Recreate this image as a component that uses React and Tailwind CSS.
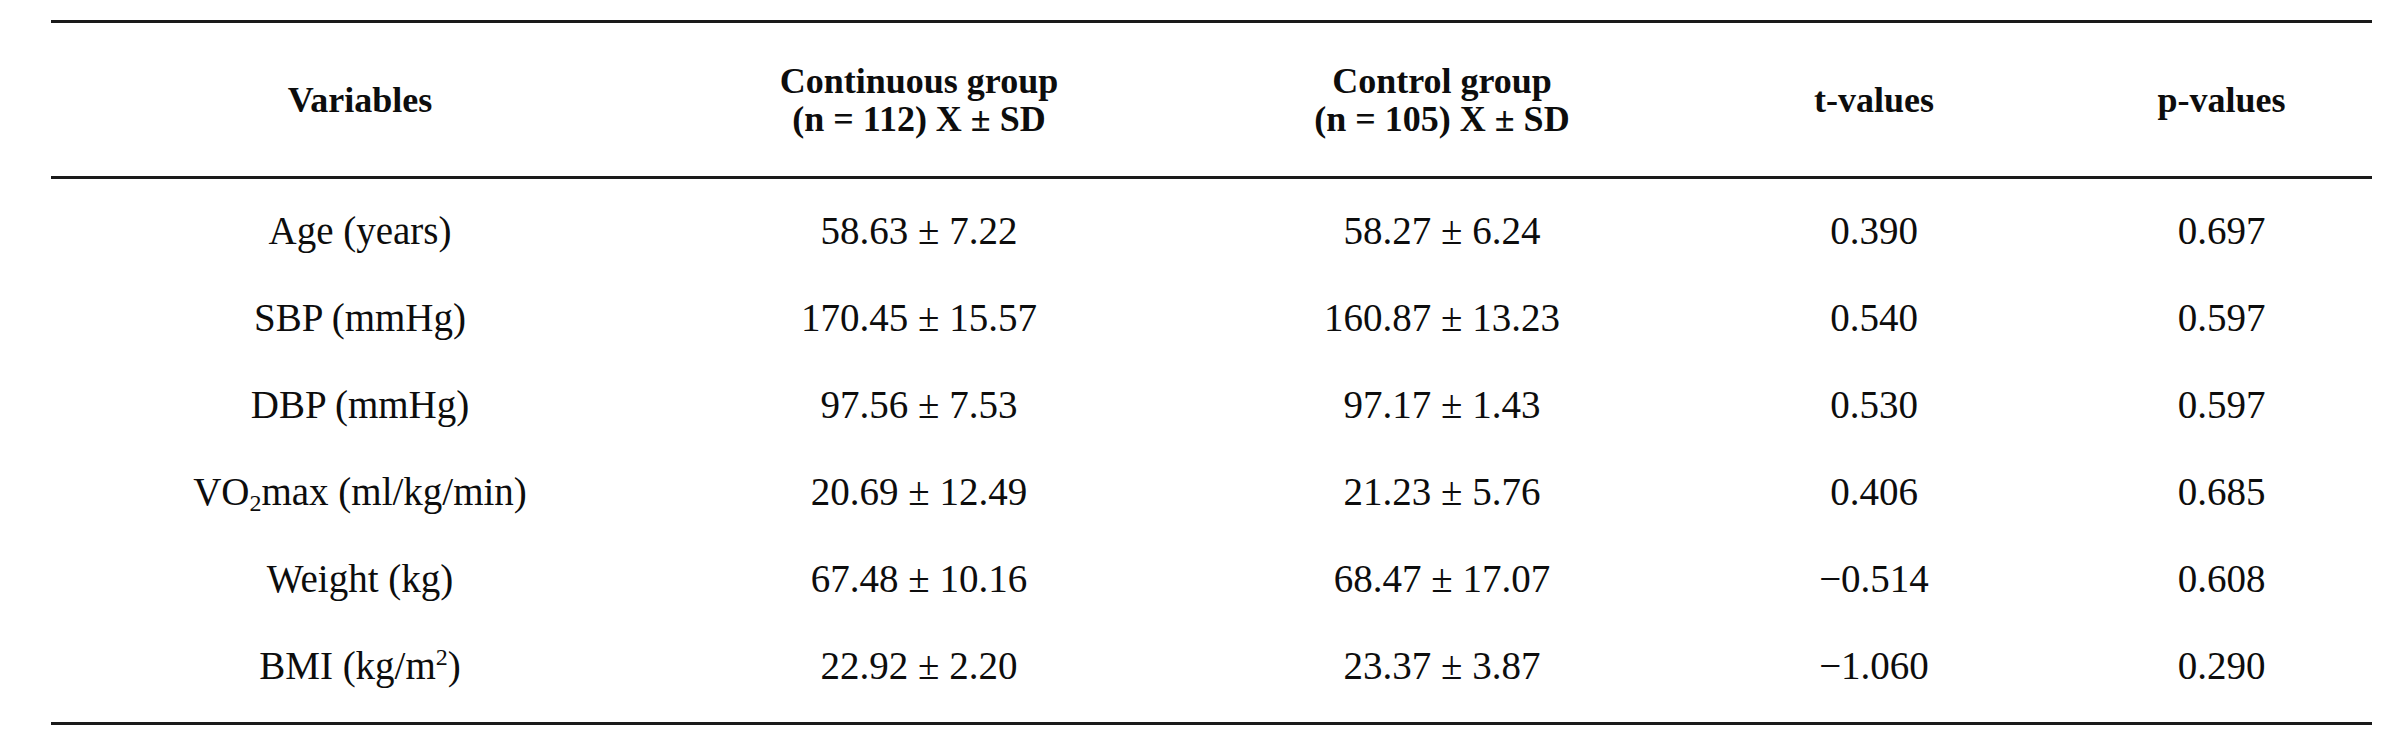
import React from 'react';

const rows = [
  { name: <>Age (years)</>, cont: '58.63 ± 7.22', ctrl: '58.27 ± 6.24', t: '0.390', p: '0.697' },
  { name: <>SBP (mmHg)</>, cont: '170.45 ± 15.57', ctrl: '160.87 ± 13.23', t: '0.540', p: '0.597' },
  { name: <>DBP (mmHg)</>, cont: '97.56 ± 7.53', ctrl: '97.17 ± 1.43', t: '0.530', p: '0.597' },
  {
    name: (
      <>
        VO<span className="text-[24px] relative top-[6px]">2</span>max (ml/kg/min)
      </>
    ),
    cont: '20.69 ± 12.49',
    ctrl: '21.23 ± 5.76',
    t: '0.406',
    p: '0.685',
  },
  { name: <>Weight (kg)</>, cont: '67.48 ± 10.16', ctrl: '68.47 ± 17.07', t: '\u22120.514', p: '0.608' },
  {
    name: (
      <>
        BMI (kg/m<span className="text-[24px] relative -top-[14px]">2</span>)
      </>
    ),
    cont: '22.92 ± 2.20',
    ctrl: '23.37 ± 3.87',
    t: '\u22121.060',
    p: '0.290',
  },
];

const cols = 'grid grid-cols-[618px_500px_546px_318px_1fr]';

const App = () => {
  return (
    <div className="w-[2405px] h-[737px] bg-white text-[#0d0d0d] font-['Liberation_Serif','Times_New_Roman',serif] pt-[20px] pl-[51px]">
      <div className="w-[2321px]">
        {/* top rule */}
        <div className="h-[3px] bg-[#1a1a1a]" />

        {/* header */}
        <div className={`${cols} h-[153px] items-center text-center font-bold text-[36px] leading-[38px]`}>
          <div>Variables</div>
          <div>
            Continuous group
            <br />
            (n = 112) X ± SD
          </div>
          <div>
            Control group
            <br />
            (n = 105) X ± SD
          </div>
          <div>t-values</div>
          <div className="pl-[38px]">p-values</div>
        </div>

        <div className="h-[3px] bg-[#1a1a1a]" />

        {/* body */}
        <div className="pt-[9px] pb-[12px] text-[39px]">
          {rows.map((r, i) => (
            <div key={i} className={`${cols} h-[87px] items-center text-center`}>
              <div>{r.name}</div>
              <div>{r.cont}</div>
              <div>{r.ctrl}</div>
              <div>{r.t}</div>
              <div className="pl-[38px]">{r.p}</div>
            </div>
          ))}
        </div>

        <div className="h-[3px] bg-[#1a1a1a]" />
      </div>
    </div>
  );
};

export default App;
